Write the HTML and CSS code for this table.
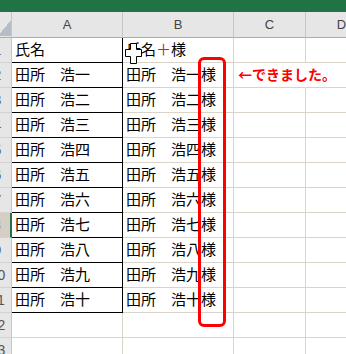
FILE: index.html
```html
<!DOCTYPE html>
<html lang="ja">
<head>
<meta charset="utf-8">
<link rel="stylesheet" href="styles.css">
</head>
<body>
<div class="titlebar"></div>
<div class="sheet">
  <div class="corner"></div>
  <div class="colhdr">A</div>
  <div class="colhdr">B</div>
  <div class="colhdr">C</div>
  <div class="colhdr">D</div>

  <div class="rowhdr">1</div>
  <div class="cell a">氏名</div>
  <div class="cell">氏名<span class="plus">＋</span>様</div>
  <div class="cell"></div>
  <div class="cell"></div>

  <div class="rowhdr">2</div>
  <div class="cell a">田所　浩一</div>
  <div class="cell">田所　浩一様</div>
  <div class="cell note">←できました。</div>
  <div class="cell"></div>

  <div class="rowhdr">3</div>
  <div class="cell a">田所　浩二</div>
  <div class="cell">田所　浩二様</div>
  <div class="cell"></div>
  <div class="cell"></div>

  <div class="rowhdr">4</div>
  <div class="cell a">田所　浩三</div>
  <div class="cell">田所　浩三様</div>
  <div class="cell"></div>
  <div class="cell"></div>

  <div class="rowhdr">5</div>
  <div class="cell a">田所　浩四</div>
  <div class="cell">田所　浩四様</div>
  <div class="cell"></div>
  <div class="cell"></div>

  <div class="rowhdr">6</div>
  <div class="cell a">田所　浩五</div>
  <div class="cell">田所　浩五様</div>
  <div class="cell"></div>
  <div class="cell"></div>

  <div class="rowhdr">7</div>
  <div class="cell a">田所　浩六</div>
  <div class="cell">田所　浩六様</div>
  <div class="cell"></div>
  <div class="cell"></div>

  <div class="rowhdr sel">8</div>
  <div class="cell a">田所　浩七</div>
  <div class="cell">田所　浩七様</div>
  <div class="cell"></div>
  <div class="cell"></div>

  <div class="rowhdr">9</div>
  <div class="cell a">田所　浩八</div>
  <div class="cell">田所　浩八様</div>
  <div class="cell"></div>
  <div class="cell"></div>

  <div class="rowhdr">10</div>
  <div class="cell a">田所　浩九</div>
  <div class="cell">田所　浩九様</div>
  <div class="cell"></div>
  <div class="cell"></div>

  <div class="rowhdr">11</div>
  <div class="cell a">田所　浩十</div>
  <div class="cell">田所　浩十様</div>
  <div class="cell"></div>
  <div class="cell"></div>

  <div class="rowhdr">12</div>
  <div class="cell"></div>
  <div class="cell"></div>
  <div class="cell"></div>
  <div class="cell"></div>

  <div class="rowhdr">13</div>
  <div class="cell"></div>
  <div class="cell"></div>
  <div class="cell"></div>
  <div class="cell"></div>
</div>
<div class="highlight"></div>
<svg class="cursor" width="17" height="21" viewBox="0 0 17 21">
  <polygon points="5.5,0.5 11.5,0.5 11.5,6.5 16.5,6.5 16.5,13.5 11.5,13.5 11.5,20.5 5.5,20.5 5.5,13.5 0.5,13.5 0.5,6.5 5.5,6.5" fill="#fff" stroke="#000" stroke-width="1"/>
</svg>
</body>
</html>
```

FILE: styles.css
```css
* { box-sizing: border-box; }

body {
  margin: 0;
  width: 346px;
  height: 354px;
  overflow: hidden;
  position: relative;
  background: #fff;
  font-family: "Noto Sans CJK JP", sans-serif;
}

.titlebar {
  height: 12px;
  background: #217346;
}

.sheet {
  display: grid;
  grid-template-columns: 31px 111px 111px 72px 72px;
  grid-template-rows: 26px;
  grid-auto-rows: 25px;
  margin-left: -19px;
}

.corner {
  border-right: 1px solid #c6c6c6;
  border-bottom: 1px solid #acacac;
  background: linear-gradient(to bottom right, transparent 50%, #b6bdc4 50%) right 0 bottom 1px / 13px 16px no-repeat, #e6e6e6;
}

.colhdr {
  background: #e6e6e6;
  border-right: 1px solid #c6c6c6;
  border-bottom: 1px solid #acacac;
  text-align: center;
  font-family: "Liberation Sans", sans-serif;
  font-size: 13px;
  line-height: 25px;
  color: #444;
}

.rowhdr {
  background: #e6e6e6;
  border-right: 1px solid #c6c6c6;
  border-bottom: 1px solid #d2d2d2;
  padding-left: 3px;
  text-align: center;
  font-family: "Liberation Sans", sans-serif;
  font-size: 14px;
  line-height: 24px;
  color: #555;
}

.rowhdr.sel {
  background: #d4cec4;
  border-right: 2px solid #217346;
}

.cell {
  border-right: 1px solid #dad3c7;
  border-bottom: 1px solid #dad3c7;
  padding-left: 3px;
  font-size: 15px;
  line-height: 22px;
  color: #000;
  white-space: nowrap;
}

.cell.a {
  border-right-color: #000;
  border-bottom-color: #000;
}

.plus {
  color: #d02020;
}

.note {
  padding-left: 4px;
  color: #ff0000;
  font-weight: 700;
  font-size: 14px;
  line-height: 23px;
  border-right-color: #fff;
}

.highlight {
  position: absolute;
  left: 198px;
  top: 57px;
  width: 28px;
  height: 270px;
  border: 3px solid #ff0000;
  border-radius: 6px;
}

.cursor {
  position: absolute;
  left: 125px;
  top: 43px;
}
```
